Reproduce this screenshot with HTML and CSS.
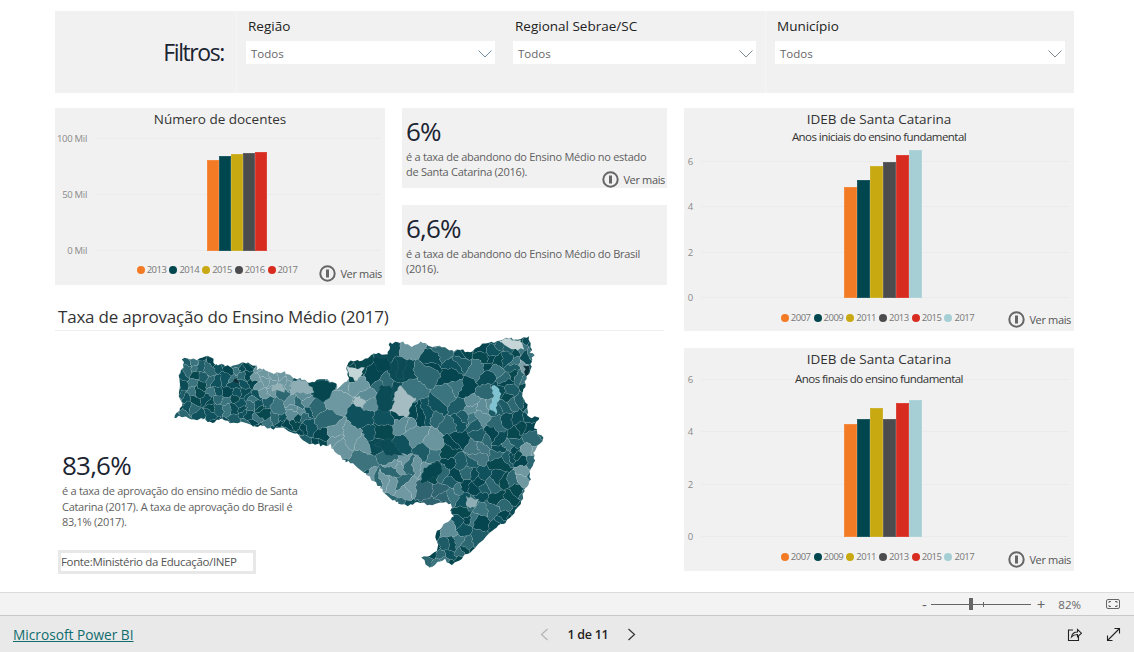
FILE: index.html
```html
<!DOCTYPE html>
<html lang="pt-BR">
<head>
    <meta charset="UTF-8">
    <title>Painel Ensino Médio - Power BI</title>
    <link rel="stylesheet" href="styles.css">
</head>
<body>
    <main class="report">
        <section class="filters">
            <h2 class="filters-title">Filtros:</h2>
            <div class="filter filter-regiao">
                <label>Região</label>
                <div class="select">Todos
                    <svg width="14" height="8" viewBox="0 0 14 8" fill="none" stroke="#6f8fa8"><polyline points="0.500,0.500 7,7 13.500,0.500"/></svg>
                </div>
            </div>
            <div class="filter filter-sebrae">
                <label>Regional Sebrae/SC</label>
                <div class="select">Todos
                    <svg width="14" height="8" viewBox="0 0 14 8" fill="none" stroke="#7d8a94"><polyline points="0.500,0.500 7,7 13.500,0.500"/></svg>
                </div>
            </div>
            <div class="filter filter-municipio">
                <label>Município</label>
                <div class="select">Todos
                    <svg width="14" height="8" viewBox="0 0 14 8" fill="none" stroke="#7d8a94"><polyline points="0.500,0.500 7,7 13.500,0.500"/></svg>
                </div>
            </div>
        </section>

        <div class="content">
            <div class="left-col">
                <div class="top-row">
                    <article class="card chart chart-docentes">
                        <h3 class="chart-title">Número de docentes</h3>
                        <div class="plot">
                            <div class="grid-row"><span>100 Mil</span><i></i></div>
                            <div class="grid-row"><span>50 Mil</span><i></i></div>
                            <div class="grid-row"><span>0 Mil</span><i></i></div>
                            <div class="bars">
                                <div class="orange" style="height:91px"></div>
                                <div class="teal" style="height:95px"></div>
                                <div class="gold" style="height:97px"></div>
                                <div class="slate" style="height:98px"></div>
                                <div class="red" style="height:99px"></div>
                            </div>
                        </div>
                        <ul class="legend">
                            <li><b class="orange"></b>2013</li>
                            <li><b class="teal"></b>2014</li>
                            <li><b class="gold"></b>2015</li>
                            <li><b class="slate"></b>2016</li>
                            <li><b class="red"></b>2017</li>
                        </ul>
                        <a class="more">
                            <svg width="17" height="17" viewBox="0 0 17 17"><circle cx="8.500" cy="8.500" r="7.200" fill="#f1f1f1" stroke="#666" stroke-width="2"/><rect x="7" y="4.500" width="3" height="8" fill="#666"/></svg>
                            Ver mais
                        </a>
                    </article>

                    <div class="kpi-col">
                        <article class="card kpi">
                            <div class="kpi-value">6%</div>
                            <p class="kpi-text">é a taxa de abandono do Ensino Médio no estado<br>de Santa Catarina (2016).</p>
                            <a class="more">
                                <svg width="17" height="17" viewBox="0 0 17 17"><circle cx="8.500" cy="8.500" r="7.200" fill="#f1f1f1" stroke="#666" stroke-width="2"/><rect x="7" y="4.500" width="3" height="8" fill="#666"/></svg>
                                Ver mais
                            </a>
                        </article>
                        <article class="card kpi">
                            <div class="kpi-value">6,6%</div>
                            <p class="kpi-text">é a taxa de abandono do Ensino Médio do Brasil<br>(2016).</p>
                        </article>
                    </div>
                </div>

                <section class="approval">
                    <h2 class="approval-title">Taxa de aprovação do Ensino Médio (2017)</h2>
                    <svg id="sc-map" class="sc-map" viewBox="0 0 1170 735" width="390" height="245"></svg>
                    <div class="approval-kpi">
                        <div class="kpi-value">83,6%</div>
                        <p class="kpi-text">é a taxa de aprovação do ensino médio de Santa<br>Catarina (2017). A taxa de aprovação do Brasil é<br>83,1% (2017).</p>
                    </div>
                    <div class="source">Fonte:Ministério da Educação/INEP</div>
                </section>
            </div>

            <div class="right-col">
                <article class="card chart chart-iniciais">
                    <h3 class="chart-title">IDEB de Santa Catarina</h3>
                    <p class="chart-sub">Anos iniciais do ensino fundamental</p>
                    <div class="plot">
                        <div class="grid-row"><span>6</span><i></i></div>
                        <div class="grid-row"><span>4</span><i></i></div>
                        <div class="grid-row"><span>2</span><i></i></div>
                        <div class="grid-row"><span>0</span><i></i></div>
                        <div class="bars">
                            <div class="orange" style="height:111px"></div>
                            <div class="teal" style="height:118px"></div>
                            <div class="gold" style="height:132px"></div>
                            <div class="slate" style="height:136px"></div>
                            <div class="red" style="height:143px"></div>
                            <div class="ice" style="height:148px"></div>
                        </div>
                    </div>
                    <ul class="legend">
                        <li><b class="orange"></b>2007</li>
                        <li><b class="teal"></b>2009</li>
                        <li><b class="gold"></b>2011</li>
                        <li><b class="slate"></b>2013</li>
                        <li><b class="red"></b>2015</li>
                        <li><b class="ice"></b>2017</li>
                    </ul>
                    <a class="more">
                        <svg width="17" height="17" viewBox="0 0 17 17"><circle cx="8.500" cy="8.500" r="7.200" fill="#f1f1f1" stroke="#666" stroke-width="2"/><rect x="7" y="4.500" width="3" height="8" fill="#666"/></svg>
                        Ver mais
                    </a>
                </article>

                <article class="card chart chart-finais">
                    <h3 class="chart-title">IDEB de Santa Catarina</h3>
                    <p class="chart-sub">Anos finais do ensino fundamental</p>
                    <div class="plot">
                        <div class="grid-row"><span>6</span><i></i></div>
                        <div class="grid-row"><span>4</span><i></i></div>
                        <div class="grid-row"><span>2</span><i></i></div>
                        <div class="grid-row"><span>0</span><i></i></div>
                        <div class="bars">
                            <div class="orange" style="height:113px"></div>
                            <div class="teal" style="height:118px"></div>
                            <div class="gold" style="height:129px"></div>
                            <div class="slate" style="height:118px"></div>
                            <div class="red" style="height:134px"></div>
                            <div class="ice" style="height:137px"></div>
                        </div>
                    </div>
                    <ul class="legend">
                        <li><b class="orange"></b>2007</li>
                        <li><b class="teal"></b>2009</li>
                        <li><b class="gold"></b>2011</li>
                        <li><b class="slate"></b>2013</li>
                        <li><b class="red"></b>2015</li>
                        <li><b class="ice"></b>2017</li>
                    </ul>
                    <a class="more">
                        <svg width="17" height="17" viewBox="0 0 17 17"><circle cx="8.500" cy="8.500" r="7.200" fill="#f1f1f1" stroke="#666" stroke-width="2"/><rect x="7" y="4.500" width="3" height="8" fill="#666"/></svg>
                        Ver mais
                    </a>
                </article>
            </div>
        </div>
    </main>

    <div class="zoom-bar">
        <span class="zoom-btn">-</span>
        <div class="zoom-track"><span class="zoom-thumb"></span><span class="zoom-tick"></span></div>
        <span class="zoom-btn zoom-plus">+</span>
        <span class="zoom-value">82%</span>
        <svg class="zoom-fit" width="16" height="12" viewBox="0 0 16 12" fill="none" stroke="#666"><rect x="1.500" y="1.500" width="13" height="9" rx="1.500"/><path d="M4 5V3.500h2M10 3.500h2V5M12 7v1.500h-2M6 8.500H4V7"/></svg>
    </div>

    <footer class="footer">
        <a class="brand">Microsoft Power BI</a>
        <nav class="pager">
            <svg width="9" height="13" viewBox="0 0 9 13" fill="none" stroke="#b4b4b4" stroke-width="1.200"><polyline points="7.500,1 1.500,6.500 7.500,12"/></svg>
            <span class="pager-text">1 de 11</span>
            <svg width="9" height="13" viewBox="0 0 9 13" fill="none" stroke="#333" stroke-width="1.200"><polyline points="1.500,1 7.500,6.500 1.500,12"/></svg>
        </nav>
        <div class="footer-actions">
            <svg width="15" height="15" viewBox="0 0 15 15" fill="none" stroke="#222" stroke-width="1.100"><path d="M6 3H1.500v10.500h10V9"/><path d="M4.500 10c.5-3 2.500-5 6-5V2.500l4 3.700-4 3.600V7.500c-2.500 0-4.500.8-6 2.500z"/></svg>
            <svg width="15" height="15" viewBox="0 0 15 15" fill="none" stroke="#222" stroke-width="1.100"><path d="M1.500 13.500l12-12M8.500 1.500h5v5M1.500 8.500v5h5"/></svg>
        </div>
    </footer>

    <script src="map.js"></script>
</body>
</html>
```

FILE: styles.css
```css
:root {
    --panel: #f1f1f1;
    --ink: #1b2431;
    --muted: #5f5f5f;
    --axis: #8a8a8a;
    --grid: #ebebeb;
}

* {
    margin: 0;
    padding: 0;
    box-sizing: border-box;
}

body {
    font-family: 'Open Sans', 'Noto Sans', sans-serif;
    background: white;
    height: 652px;
    overflow: hidden;
    display: flex;
    flex-direction: column;
}

.report {
    height: 592px;
    padding: 11px 60px 0 55px;
}

/* filtros */
.filters {
    height: 82px;
    background: var(--panel);
    display: flex;
}

.filters-title {
    width: 182px;
    padding: 25px 12px 0 0;
    text-align: right;
    font-size: 23px;
    font-weight: 400;
    letter-spacing: -1.4px;
    color: var(--ink);
    border-right: 1px solid #f5f5f5;
}

.filter {
    padding: 5px 0 0 9px;
}

.filter label {
    display: block;
    font-size: 13.5px;
    line-height: 20px;
    margin: 0 0 5px 2px;
    color: #222;
}

.filter-regiao { width: 267px; }
.filter-sebrae { width: 261px; }
.filter-municipio {
    flex: 1;
    border-left: 1px solid #f5f5f5;
}

.select {
    height: 23px;
    background: white;
    display: flex;
    align-items: center;
    justify-content: space-between;
    padding: 2px 3px 0 5px;
    font-size: 11.5px;
    color: #666;
}

.filter-regiao .select { width: 249px; }
.filter-sebrae .select { width: 243px; }
.filter-municipio .select { width: 290px; }

/* grade principal */
.content {
    display: grid;
    grid-template-columns: 612px 390px;
    column-gap: 17px;
    margin-top: 15px;
}

.top-row {
    display: grid;
    grid-template-columns: 330px 265px;
    column-gap: 17px;
}

.kpi-col,
.right-col {
    display: flex;
    flex-direction: column;
    gap: 17px;
}

.card {
    background: var(--panel);
    position: relative;
}

/* graficos */
.chart-title {
    font-size: 13.5px;
    line-height: 20px;
    font-weight: 400;
    text-align: center;
    color: #333;
}

.chart-sub {
    position: relative;
    z-index: 1;
    font-size: 11.5px;
    line-height: 16px;
    text-align: center;
    letter-spacing: -0.55px;
    color: #333;
}

.plot {
    position: relative;
    display: flex;
    flex-direction: column;
    justify-content: space-between;
}

.grid-row {
    height: 1px;
    display: flex;
    align-items: center;
}

.grid-row span {
    font-size: 9.5px;
    letter-spacing: -0.3px;
    color: var(--axis);
    text-align: right;
    white-space: nowrap;
}

.grid-row i {
    flex: 1;
    height: 1px;
    background: var(--grid);
}

.bars {
    position: absolute;
    bottom: 0;
    display: flex;
    align-items: flex-end;
}

.bars div {
    box-shadow: inset 0 0 0 1px rgba(255, 255, 255, 0.12);
}

.legend {
    list-style: none;
    display: flex;
    justify-content: center;
    font-size: 9.5px;
    letter-spacing: -0.5px;
    color: #777;
}

.legend li {
    display: flex;
    align-items: center;
    gap: 2px;
}

.legend b {
    width: 8px;
    height: 8px;
    border-radius: 50%;
}

.orange { background: #f47b25; }
.teal { background: #00464f; }
.gold { background: #c8a912; }
.slate { background: #4c4c4e; }
.red { background: #d92c20; }
.ice { background: #a5cfd5; }

.more {
    position: absolute;
    right: 3px;
    bottom: 3px;
    display: flex;
    align-items: center;
    gap: 4px;
    font-size: 11px;
    letter-spacing: -0.35px;
    color: #555;
}

.kpi .more {
    right: 2px;
    bottom: 0;
}

.chart-docentes {
    height: 177px;
    padding-top: 1px;
}

.chart-docentes .plot {
    height: 113px;
    margin: 9px 5px 0 0;
}

.chart-docentes .grid-row span {
    width: 32px;
    margin-right: 10px;
}

.chart-docentes .bars {
    left: 152px;
}

.chart-docentes .bars div {
    width: 12px;
}

.chart-docentes .legend {
    margin: 12px 0 0 -6px;
    gap: 3px;
}

.chart-iniciais,
.chart-finais {
    height: 223px;
    padding-top: 1px;
}

.chart-iniciais .plot {
    height: 137px;
    margin: 16px 5px 0 0;
}

.chart-finais .chart-sub {
    margin-top: 2px;
}

.chart-finais .plot {
    height: 158px;
    margin: -8px 5px 0 0;
}

.chart-iniciais .grid-row span,
.chart-finais .grid-row span {
    width: 9px;
    margin-right: 8px;
}

.chart-iniciais .bars,
.chart-finais .bars {
    left: 160px;
}

.chart-iniciais .bars div,
.chart-finais .bars div {
    width: 13px;
}

.chart-iniciais .legend,
.chart-finais .legend {
    margin: 13px 0 0 -3px;
    gap: 3px;
}

/* indicadores */
.kpi {
    height: 80px;
    padding: 5px 4px 0;
}

.kpi-value {
    font-size: 26px;
    line-height: 36px;
    letter-spacing: -0.8px;
    color: var(--ink);
}

.kpi-text {
    font-size: 11px;
    line-height: 15px;
    letter-spacing: -0.28px;
    color: var(--muted);
}

/* aprovacao */
.approval {
    position: relative;
    height: 271px;
    margin-top: 15px;
    padding-left: 3px;
}

.approval-title {
    font-size: 17px;
    line-height: 26px;
    font-weight: 400;
    letter-spacing: -0.2px;
    color: #333;
    border-bottom: 1px solid #eee;
    margin: 0 3px 0 -3px;
    padding: 4px 0 0 3px;
}

.sc-map {
    position: absolute;
    left: 105px;
    top: 30px;
}

.approval-kpi {
    position: relative;
    margin-top: 116px;
    padding-left: 4px;
}

.approval-kpi .kpi-text {
    line-height: 15.5px;
}

.source {
    position: relative;
    width: 198px;
    height: 24px;
    margin-top: 20px;
    border: 3px solid #e8e8e8;
    font-size: 11.5px;
    line-height: 18px;
    letter-spacing: -0.35px;
    color: #555;
    white-space: nowrap;
}

/* barras de baixo */
.zoom-bar {
    height: 23px;
    background: #f3f3f3;
    border-top: 1px solid #dcdcdc;
    display: flex;
    align-items: center;
    justify-content: flex-end;
    padding-right: 13px;
    color: #666;
}

.zoom-btn {
    font-size: 15px;
    line-height: 20px;
}

.zoom-track {
    width: 100px;
    height: 1px;
    background: #666;
    margin: 0 6px 0 4px;
    display: flex;
    align-items: center;
    position: relative;
}

.zoom-thumb {
    position: absolute;
    left: 38px;
    width: 4px;
    height: 12px;
    background: #666;
}

.zoom-tick {
    position: absolute;
    left: 52px;
    width: 1px;
    height: 5px;
    background: #666;
}

.zoom-value {
    font-size: 11.5px;
    margin: 0 24px 0 13px;
}

.footer {
    height: 37px;
    background: #e9e9e9;
    border-top: 1px solid #c8c8c8;
    display: grid;
    grid-template-columns: 1fr auto 1fr;
    align-items: center;
    padding: 0 13px;
}

.brand {
    font-size: 13.7px;
    line-height: 18px;
    padding-top: 2px;
    color: #106d6f;
    text-decoration: underline;
}

.pager {
    display: flex;
    align-items: center;
    gap: 19px;
    margin-left: 42px;
}

.pager-text {
    font-size: 12.5px;
    font-weight: 600;
    letter-spacing: -0.3px;
    color: #222;
}

.footer-actions {
    display: flex;
    justify-content: flex-end;
    gap: 24px;
}
```

FILE: map.js
```js
// Santa Catarina: contorno tracado a mao, municipios gerados como celulas de Voronoi
const NS = 'http://www.w3.org/2000/svg';
const svg = document.getElementById('sc-map');

const outline = [[70,90],[100,85],[150,82],[165,100],[200,110],[240,100],[285,105],[290,115],[330,125],[370,130],[410,145],[445,155],[490,150],[525,155],[535,180],[560,155],[565,100],[600,90],[640,75],[680,70],[690,35],[750,45],[790,40],[830,50],[880,60],[925,65],[960,50],[1010,30],[1085,25],[1110,25],[1110,65],[1125,70],[1110,105],[1105,135],[1095,160],[1085,180],[1100,235],[1110,260],[1135,265],[1120,290],[1150,320],[1130,350],[1120,390],[1110,440],[1090,500],[1060,555],[1000,600],[960,640],[880,705],[850,690],[805,712],[790,685],[830,660],[830,600],[860,570],[880,560],[870,520],[800,522],[770,520],[720,525],[680,495],[645,455],[590,410],[530,375],[510,340],[480,350],[430,330],[410,310],[360,295],[300,290],[250,280],[180,270],[150,275],[100,265],[45,262],[65,215],[55,175]];

// zonas de cor: x, y, raio, cor
const zones = [
    [340,150,62,'#6f98a1'], [400,210,42,'#5f8d97'],
    [570,185,50,'#6e98a1'], [560,310,65,'#6b959e'], [625,190,30,'#5f8d97'],
    [700,440,78,'#6f98a2'], [770,420,36,'#6a949e'], [745,315,46,'#5f8d97'],
    [830,345,36,'#6b959e'], [795,105,18,'#5d8a94'],
    [770,65,24,'#6b959e'], [965,235,40,'#5f8d97'], [970,365,36,'#437680'],
    [1060,210,18,'#93b1b7'], [1095,100,18,'#7ea1a9'], [1110,350,36,'#6f98a1'],
    [1080,430,24,'#6f98a1'], [860,610,24,'#5f8d97'],
    [820,490,42,'#2f6370'], [610,390,26,'#3d737d']
];

const darks = ['#04454f', '#07484f', '#0b4b56', '#0f515c', '#1d5c67', '#2d6872', '#3b747e'];

let state = 42;
function rnd() {
    state = (state * 16807) % 2147483647;
    return state / 2147483647;
}

function seeds() {
    const list = [];
    for (let y = 20; y < 720; y += 24) {
        for (let x = 30; x < 1160; x += 24) {
            const keep = x < 450 ? 0.85 : x < 820 ? 0.28 : 0.5;
            const px = x + (rnd() - 0.5) * 20;
            const py = y + (rnd() - 0.5) * 20;
            if (rnd() < keep) list.push([px, py]);
        }
    }
    return list;
}

// recorta o poligono pelo semiplano mais perto de a do que de b
function clip(poly, a, b) {
    const mx = (a[0] + b[0]) / 2, my = (a[1] + b[1]) / 2;
    const nx = b[0] - a[0], ny = b[1] - a[1];
    const side = p => (p[0] - mx) * nx + (p[1] - my) * ny;
    const out = [];
    for (let i = 0; i < poly.length; i++) {
        const p = poly[i], q = poly[(i + 1) % poly.length];
        const sp = side(p), sq = side(q);
        if (sp <= 0) out.push(p);
        if (sp * sq < 0) {
            const t = sp / (sp - sq);
            out.push([p[0] + (q[0] - p[0]) * t, p[1] + (q[1] - p[1]) * t]);
        }
    }
    return out;
}

function colorAt(p) {
    for (const z of zones) {
        if (Math.hypot(p[0] - z[0], p[1] - z[1]) < z[2]) {
            return rnd() < 0.85 ? z[3] : '#2d6872';
        }
    }
    return darks[Math.floor(Math.pow(rnd(), 1.1) * darks.length)];
}

// entorta as arestas para nao parecerem retas
function warp(p) {
    const x = p[0], y = p[1];
    return [
        x + 4 * Math.sin(y * 0.11 + x * 0.03) + 2.5 * Math.sin(y * 0.37 + x * 0.13),
        y + 4 * Math.sin(x * 0.10 + y * 0.04) + 2.5 * Math.sin(x * 0.33 + y * 0.11)
    ];
}

function wiggle(pts) {
    const out = [];
    pts.forEach((p, i) => {
        const q = pts[(i + 1) % pts.length];
        const steps = Math.max(1, Math.ceil(Math.hypot(q[0] - p[0], q[1] - p[1]) / 9));
        for (let s = 0; s < steps; s++) {
            const t = s / steps;
            out.push(warp([p[0] + (q[0] - p[0]) * t, p[1] + (q[1] - p[1]) * t]));
        }
    });
    return out;
}

function addPoly(parent, pts, fill) {
    const el = document.createElementNS(NS, 'polygon');
    el.setAttribute('points', wiggle(pts).map(p => p[0].toFixed(1) + ',' + p[1].toFixed(1)).join(' '));
    el.setAttribute('fill', fill);
    el.setAttribute('stroke', 'rgba(255,255,255,0.16)');
    el.setAttribute('stroke-width', '1.3');
    parent.appendChild(el);
}

const defs = document.createElementNS(NS, 'defs');
const clipEl = document.createElementNS(NS, 'clipPath');
clipEl.id = 'sc-outline';
addPoly(clipEl, outline, '#000');
defs.appendChild(clipEl);
svg.appendChild(defs);

const group = document.createElementNS(NS, 'g');
group.setAttribute('clip-path', 'url(#sc-outline)');
svg.appendChild(group);

const sites = seeds();
sites.forEach((s, i) => {
    let cell = [[0,0],[1170,0],[1170,735],[0,735]];
    sites.forEach((o, j) => {
        if (i !== j && Math.hypot(s[0] - o[0], s[1] - o[1]) < 200 && cell.length) cell = clip(cell, s, o);
    });
    if (cell.length > 2) addPoly(group, cell, colorAt(s));
});

// areas que se destacam no mapa
const patches = [
    [[[445,155],[525,155],[530,180],[490,215],[465,205]], '#06474f'],
    [[[655,170],[700,170],[695,245],[650,240]], '#0b4b56'],
    [[[642,85],[685,78],[690,125],[650,120]], '#04454f'],
    [[[710,80],[738,85],[730,150],[712,140]], '#0b4b56'],
    [[[795,410],[840,400],[845,430],[790,465],[780,430]], '#05464f'],
    [[[640,345],[690,325],[730,380],[690,375]], '#0b4b56'],
    [[[400,150],[445,155],[460,185],[385,195]], '#8fadb4'],
    [[[338,165],[372,165],[375,185],[340,185]], '#93b1b7'],
    [[[578,200],[620,210],[610,230],[585,228]], '#a5bfc4'],
    [[[715,165],[765,205],[745,260],[690,245],[705,200]], '#a4bcc2'],
    [[[565,115],[615,110],[590,150],[565,140]], '#c4d6d8'],
    [[[1015,30],[1085,28],[1088,60],[1040,50]], '#c6d6d8'],
    [[[915,503],[955,505],[950,530],[920,528]], '#8fadb4'],
    [[[1000,165],[1018,165],[1018,210],[1005,255],[992,230]], '#7fc3d0'],
    [[[1090,105],[1105,105],[1105,135],[1092,130]], '#0b3038'],
    [[[224,150],[237,150],[238,163],[225,163]], '#0b3038']
];
patches.forEach(p => addPoly(group, p[0], p[1]));
```
